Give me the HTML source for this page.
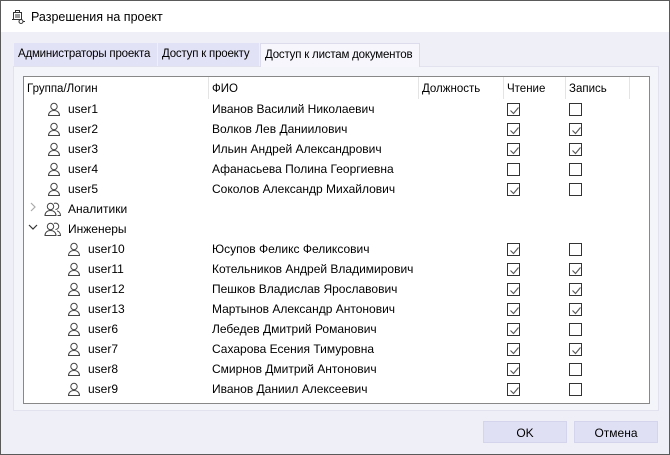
<!DOCTYPE html><html><head><meta charset="utf-8"><style>
*{margin:0;padding:0;box-sizing:border-box}
body{width:670px;height:455px;overflow:hidden;font-family:"Liberation Sans",sans-serif;font-size:12px;color:#000;background:#fff}
.win{position:absolute;left:0;top:0;width:670px;height:455px;border:1px solid #5a5a5a;background:#efeff7}
.title{position:absolute;left:0;top:0;width:668px;height:31px;background:#fff}
.title span{position:absolute;left:30px;top:9px;font-size:12.5px}
.tab{position:absolute;top:42px;height:23px;background:#e2e2f6;padding:5px 0 0 4px;font-size:11.5px;letter-spacing:-0.2px;white-space:nowrap;overflow:hidden}
.tab.act{background:#f6f6fc;top:42px;height:24px;border:1px solid #dcdcec;border-bottom:none}
.panel{position:absolute;left:12px;top:65px;width:646px;height:345px;background:#f4f4fb;border:1px solid #e2e2ee}
.grid{position:absolute;left:22px;top:75px;width:627px;height:328px;background:#fff;border:1px solid #888}
.hd{position:absolute;top:6px;font-size:11.5px}
.dv{position:absolute;top:0;width:1px;height:22px;background:#e4e4e4}
.r{position:absolute;left:-1px;width:625px;height:20px}
.r span{position:absolute;top:3px;white-space:nowrap}
.cb{position:absolute;top:4px;width:13px;height:13px;border:1px solid #333;background:#fff}
.cb svg{position:absolute;left:1px;top:1px}
.ic{position:absolute;top:3px}
.btn{position:absolute;top:420px;width:84px;height:22px;background:#e0e0f5;border:1px solid #d4d4ec;text-align:center;padding-top:4px}
</style></head><body><div class="win">
<div class="title">
<svg style="position:absolute;left:9px;top:8px" width="16" height="16" viewBox="0 0 16 16" fill="none" stroke="#333" stroke-width="1"><rect x="3.5" y="3.5" width="8" height="7"/><path d="M5.5 3.5V1.5h4v2M5 6h5M5 8h5M2 10.5h4M9 12.5a2 2 0 1 0 4 0a2 2 0 1 0-4 0M13 12.5h2"/></svg>
<span>Разрешения на проект</span></div>
<div class="tab" style="left:13px;width:143px">Администраторы проекта</div>
<div class="tab" style="left:157px;width:101px">Доступ к проекту</div>
<div class="panel"></div>
<div class="tab act" style="left:259px;width:160px">Доступ к листам документов</div>
<div class="grid">
<div class="hd" style="left:3px">Группа/Логин</div><div class="dv" style="left:184px"></div>
<div class="hd" style="left:188px">ФИО</div><div class="dv" style="left:394px"></div>
<div class="hd" style="left:398px">Должность</div><div class="dv" style="left:479px"></div>
<div class="hd" style="left:483px">Чтение</div><div class="dv" style="left:541px"></div>
<div class="hd" style="left:545px">Запись</div><div class="dv" style="left:605px"></div>
<div id="rows"></div>
</div>
<div class="btn" style="left:482px">OK</div>
<div class="btn" style="left:573px">Отмена</div>
</div>
<script>
var U='<svg width="14" height="14" viewBox="0 0 14 14" fill="none" stroke="#444" stroke-width="1"><circle cx="7" cy="4.5" r="3.2"/><path d="M1.5 13.5c0-3 2.3-5 5.5-5s5.5 2 5.5 5z"/></svg>';
var G='<svg width="18" height="14" viewBox="0 0 18 14" fill="none" stroke="#444" stroke-width="1"><circle cx="6.5" cy="4.5" r="3.2"/><path d="M1 13.5c0-3 2.3-5 5.5-5s5.5 2 5.5 5z"/><path d="M10 1.5a3.2 3.2 0 1 1 1.5 6M13 8.8c2 .6 3.5 2.3 3.5 4.7h-3"/></svg>';
var C='<svg width="11" height="11" viewBox="0 0 11 11" fill="none" stroke="#555" stroke-width="1.1"><path d="M1.5 5.5l3 3 5-6"/></svg>';
var d=[["user1","Иванов Василий Николаевич",1,0,0],["user2","Волков Лев Даниилович",1,1,0],["user3","Ильин Андрей Александрович",1,1,0],["user4","Афанасьева Полина Георгиевна",0,0,0],["user5","Соколов Александр Михайлович",1,0,0],["Аналитики","",-1,-1,2],["Инженеры","",-1,-1,3],["user10","Юсупов Феликс Феликсович",1,0,1],["user11","Котельников Андрей Владимирович",1,1,1],["user12","Пешков Владислав Ярославович",1,1,1],["user13","Мартынов Александр Антонович",1,1,1],["user6","Лебедев Дмитрий Романович",1,0,1],["user7","Сахарова Есения Тимуровна",1,1,1],["user8","Смирнов Дмитрий Антонович",1,0,1],["user9","Иванов Даниил Алексеевич",1,0,1]];
var h='';d.forEach(function(r,i){var t=22+i*20;h+='<div class="r" style="top:'+t+'px">';
if(r[4]>=2){h+='<span style="left:5px;top:1px">'+(r[4]==2?'<svg width="10" height="14" viewBox="0 0 10 14" fill="none" stroke="#aaa" stroke-width="1.2"><path d="M3 3l4 4-4 4"/></svg>':'<svg width="10" height="14" viewBox="0 0 10 14" fill="none" stroke="#333" stroke-width="1.2"><path d="M1 5l4 4 4-4"/></svg>')+'</span><div class="ic" style="left:21px">'+G+'</div><span style="left:45px">'+r[0]+'</span>';}
else{var o=r[4]?20:0;h+='<div class="ic" style="left:'+(24+o)+'px">'+U+'</div><span style="left:'+(45+o)+'px">'+r[0]+'</span><span style="left:189px">'+r[1]+'</span>';
h+='<div class="cb" style="left:484px">'+(r[2]?C:'')+'</div><div class="cb" style="left:546px">'+(r[3]?C:'')+'</div>';}
h+='</div>';});document.getElementById('rows').innerHTML=h;
</script>
</body></html>
